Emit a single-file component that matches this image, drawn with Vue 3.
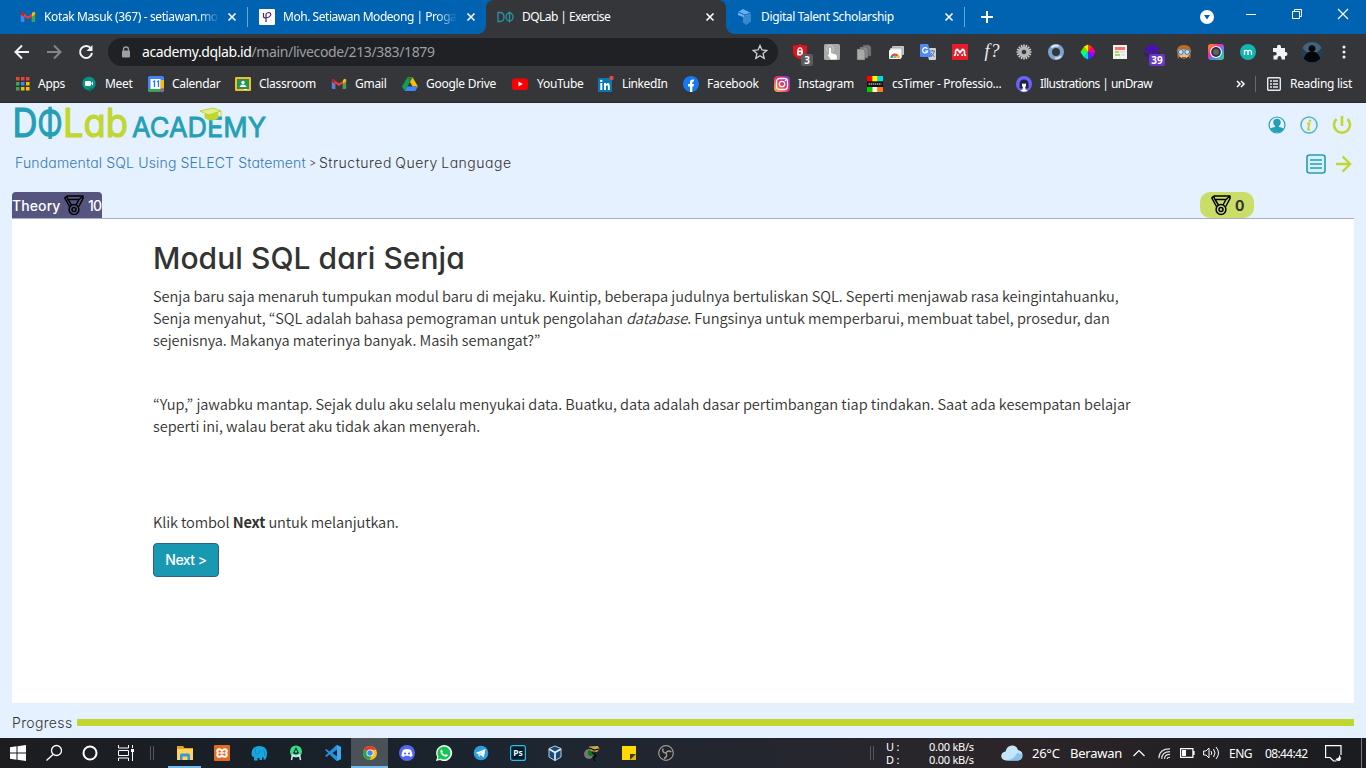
<script setup>
const bookmarks = [
  { id: 'apps', label: 'Apps', w: 66 },
  { id: 'meet', label: 'Meet', w: 67 },
  { id: 'calendar', label: 'Calendar', w: 87 },
  { id: 'classroom', label: 'Classroom', w: 96 },
  { id: 'gmail', label: 'Gmail', w: 71 },
  { id: 'drive', label: 'Google Drive', w: 110 },
  { id: 'youtube', label: 'YouTube', w: 86 },
  { id: 'linkedin', label: 'LinkedIn', w: 85 },
  { id: 'facebook', label: 'Facebook', w: 91 },
  { id: 'instagram', label: 'Instagram', w: 93 },
  { id: 'cstimer', label: 'csTimer - Professio...', w: 149 },
  { id: 'undraw', label: 'Illustrations | unDraw', w: 150 },
]

const extensions = ['shield', 'touch', 'copies', 'cards', 'translate', 'mendeley', 'fq', 'gear', 'ring', 'wheel', 'doc', 'layers', 'face', 'camera', 'm', 'puzzle', 'avatar', 'dots']
const apps = ['folder', 'xampp', 'elephant', 'android', 'vscode', 'chrome', 'discord', 'whatsapp', 'telegram', 'ps', 'vbox', 'game', 'note', 'obs']

const gmail = '<path d="M1.500 3v10h3V7.500L8 10l3.500-2.500V13h3V3L8 7.500z" fill="#ea4335"/><path d="M.8 5.500v6.300q0 1.200 1.200 1.200h2V7.800z" fill="#4285f4"/><path d="M15.200 5.500v6.300q0 1.200-1.200 1.200h-2V7.800z" fill="#34a853"/><path d="M12 4v3.800l3.200-2.300V4q-.8-2-2.400-.7z" fill="#fbbc04"/><path d="M4 4v3.800L.8 5.500V4q.8-2 2.400-.7z" fill="#c5221f"/>'

const icons = {
  gmail,
  apps: '<g fill="#ea4335"><rect x="1" y="1" width="3.500" height="3.500"/><rect x="6" y="1" width="3.500" height="3.500"/><rect x="11" y="1" width="3.500" height="3.500"/></g><rect x="1" y="6" width="3.500" height="3.500" fill="#34a853"/><rect x="6" y="6" width="3.500" height="3.500" fill="#4285f4"/><rect x="11" y="6" width="3.500" height="3.500" fill="#fbbc04"/><rect x="1" y="11" width="3.500" height="3.500" fill="#34a853"/><rect x="6" y="11" width="3.500" height="3.500" fill="#fbbc04"/><rect x="11" y="11" width="3.500" height="3.500" fill="#fbbc04"/>',
  meet: '<circle cx="8" cy="7.500" r="6.700" fill="#009688"/><path d="M8 12v4l5-4z" fill="#00796b"/><rect x="4" y="5" width="6" height="5" rx="1" fill="#fff"/><path d="M10 7.500 12 5.500v4z" fill="#fff"/>',
  calendar: '<rect width="16" height="16" rx="1.500" fill="#4285f4"/><path d="M12.500 4H16v8.500h-3.500z" fill="#fbbc04"/><path d="M2 12.500h10.500V16H2q-2 0-2-2v-1.500z" fill="#34a853"/><path d="M12.500 12.500H16L12.500 16z" fill="#ea4335"/><rect x="2.500" y="3" width="10" height="10" fill="#fff"/><path d="M5 5.800 6.500 5v6M9 5.800l1.500-.8v6" fill="none" stroke="#1a73e8" stroke-width="1.300"/>',
  classroom: '<rect y="1" width="16" height="14" rx="1.300" fill="#f9bb2d"/><rect x="2" y="3" width="12" height="10" fill="#219653"/><circle cx="8" cy="6.500" r="1.700" fill="#fff"/><path d="M4.500 11q.5-2.500 3.500-2.500t3.500 2.500z" fill="#fff"/><path d="M9 13h3v1H9z" fill="#fff"/>',
  drive: '<path d="M5.300 1.500h5.400L16 10.500h-5.400z" fill="#fbbc04"/><path d="M5.300 1.500 8 6 2.700 15 0 10.500z" fill="#0f9d58"/><path d="M5.300 10.500H16L13.300 15H2.700z" fill="#4285f4"/><path d="M5.300 1.500h5.400L8 6z" fill="#188038"/>',
  youtube: '<rect x="0" y="2.500" width="16" height="11.500" rx="3" fill="#f00"/><path d="M6.500 5.500v5l4.300-2.500z" fill="#fff"/>',
  linkedin: '<rect x="0" y="2" width="14" height="14" rx="1" fill="#0a77b5"/><g fill="#fff"><rect x="2.300" y="7" width="2" height="7"/><circle cx="3.300" cy="4.900" r="1.200"/><path d="M6 7h2v1q3.800-2.500 3.800 2V14H9.900v-3.700q-.9-2.300-1.900 0V14H6z"/></g><circle cx="13.500" cy="2" r="2.200" fill="#e34b40"/>',
  facebook: '<circle cx="8" cy="8" r="8" fill="#1778f2"/><path d="M7 16v-5.500H5V8h2V6q0-3 4-2.500v2Q9.300 5.200 9.300 6.500V8H11l-.4 2.500H9.300V16z" fill="#fff"/>',
  instagram: '<defs><linearGradient id="ig" x1="0" y1="1" x2="1" y2="0"><stop stop-color="#ffc14d"/><stop offset=".5" stop-color="#ec2e63"/><stop offset="1" stop-color="#7638e8"/></linearGradient></defs><rect width="16" height="16" rx="4" fill="url(#ig)"/><rect x="2.500" y="2.500" width="11" height="11" rx="3" fill="none" stroke="#fff" stroke-width="1.300"/><circle cx="8" cy="8" r="2.700" fill="none" stroke="#fff" stroke-width="1.300"/><circle cx="11.500" cy="4.500" r=".8" fill="#fff"/>',
  cstimer: '<rect width="16" height="16" fill="#111"/><rect width="5.300" height="5.300" fill="#f00"/><rect x="5.300" width="5.400" height="5.300" fill="#ff0"/><rect x="10.700" width="5.300" height="5.300" fill="#00dce8"/><rect y="11" width="5.300" height="5" fill="#00d000"/><rect x="5.300" y="11" width="5.400" height="5" fill="#fff6d8"/><rect x="10.700" y="11" width="5.300" height="5" fill="#ff7a18"/><path d="M1.500 8h13" stroke="#aaa" stroke-dasharray="1.500 .6" stroke-width="1.600"/>',
  undraw: '<circle cx="8" cy="8" r="8" fill="#6c63ff"/><path d="M3.500 12V8q0-4.500 4.500-4.500T12.500 8v4q-2 1-3 0H6q-1 1-2.500 0z" fill="#24233c"/><path d="M6 7.500q2 .5 4 0V10l-.8 1.500V13l2.300 2q-3.500 1.500-7 0L7 13v-1.500L6 10z" fill="#fff"/>',
  shield: '<path d="M8 0q3 2 7 1.500V8q0 5-7 7.500Q1 13 1 8V1.500Q5 2 8 0z" fill="#e3131b"/><path d="M6 7V5.500q2-3.500 4 0V7" fill="none" stroke="#fff" stroke-width="1.400"/><rect x="5" y="6.500" width="6" height="5" rx="1" fill="#fff"/><circle cx="8" cy="9" r="1" fill="#e3131b"/>',
  touch: '<rect width="16" height="16" rx="1.500" fill="#a9a9a9"/><circle cx="6" cy="5" r="3.500" fill="none" stroke="#ccc"/><path d="M5 4q1-1 2 0v5l5 1.500q1.500 1 .5 5H7L3.500 11l1.500-.5z" fill="#fff"/>',
  copies: '<g stroke="#505154" stroke-width=".5"><path d="M7 1h6l2 2v9H7z" fill="#777"/><path d="M4 3h6l2 2v9H4z" fill="#8b8b8b"/><path d="M1 5h6l2 2v9H1z" fill="#a9a9a9"/></g>',
  cards: '<rect x="4" y="2" width="12" height="9" rx="1" fill="#c8c8c8"/><rect x="2" y="4" width="12" height="10" rx="1" fill="#eee" stroke="#777" stroke-width=".5"/><rect x="1" y="6" width="12" height="9" rx="1" fill="#fff"/><path d="M2.500 14a4.500 4.500 0 0 1 9 0z" fill="#e94335"/><path d="M2.500 14q0-2.500 2-3.500l1.500 3.500z" fill="#34a853"/><path d="M8 14l2-3.500q2 1 2 3.500z" fill="#fbbc04"/><path d="M5 14a2 2 0 0 1 4 0z" fill="#4285f4" stroke="#fff" stroke-width=".6"/>',
  translate: '<path d="M6 4h9q1 0 1 1v10q0 1-1 1H9z" fill="#d0d3d6"/><path d="M1 0h7l4 13H1q-1 0-1-1V1q0-1 1-1z" fill="#4c8bf5"/><path d="M7.300 4.800a2.600 2.600 0 1 0 .4 2.200H5.200" fill="none" stroke="#fff" stroke-width="1.200"/><path d="M10 7h5m-2.500-1v1m2 0q-1 4-3.500 5m0-3 3.500 4" fill="none" stroke="#607d8b"/>',
  mendeley: '<rect width="16" height="16" fill="#e51d2b"/><path d="M1.800 11.300q2.200 0 1.700-2.300Q3.300 5.800 5 5.500M14.200 11.300Q12 11.300 12.500 9q.2-3.200-1.500-3.500M5.200 5.500Q8 9.500 10.800 5.500" fill="none" stroke="#fff" stroke-width="1.700"/><g fill="#fff"><circle cx="5.300" cy="5.800" r="1.300"/><circle cx="10.700" cy="5.800" r="1.300"/><circle cx="8" cy="8" r="1.500"/><circle cx="5.800" cy="11" r="1"/><circle cx="10.200" cy="11" r="1"/></g>',
  fq: '<text x="8" y="13" font-family="Liberation Serif, serif" font-size="18" font-style="italic" text-anchor="middle" fill="#eee" textLength="15">f?</text>',
  gear: '<g stroke="#d0d0d0" stroke-width="1.600"><path d="M8 .5v15M.5 8h15M2.700 2.700l10.600 10.600M13.300 2.700 2.700 13.300M5.200 1l5.600 14M10.800 1 5.200 15M1 5.200l14 5.600M1 10.800l14-5.600"/></g><circle cx="8" cy="8" r="5" fill="#b5b5b5"/><circle cx="8" cy="8" r="2.300" fill="#35363a"/>',
  ring: '<circle cx="8" cy="8" r="6" fill="none" stroke="#7fa3cc" stroke-width="4"/><path d="M3.500 3.500a6.500 6.500 0 0 1 7-1.500" fill="none" stroke="#dce9f5" stroke-width="2"/><path d="M13 12a6.500 6.500 0 0 1-6 2.300" fill="none" stroke="#cbdced" stroke-width="2"/>',
  wheel: '<path d="M8 8V.5L12 2.500z" fill="#f40"/><path d="M8 8l4-5.500L15.500 8z" fill="#ff0080"/><path d="M8 8h7.500L12 13.500z" fill="#a0f"/><path d="M8 8l4 5.500-4 2z" fill="#33f"/><path d="M8 8v7.500l-4-2z" fill="#0cf"/><path d="M8 8l-4 5.500L.5 8z" fill="#0f8"/><path d="M8 8H.5L4 2.500z" fill="#5e0"/><path d="M8 8 4 2.500 8 .5z" fill="#fe0"/>',
  doc: '<rect x="1" y="1" width="14" height="14" fill="#f2f2f2"/><path d="M3 3h10v3H3z" fill="#ff6f6f"/><path d="M3 8h4m-4 3h5" stroke="#8dcf3c" stroke-width="1.500"/><path d="M8 8h5m-4 3h4" stroke="#ddd" stroke-width="1.500"/>',
  layers: '<path d="M8 0l8 5-8 5-8-5z" fill="#4a0fb5"/><path d="M0 8l8 5 8-5v2.500l-8 5-8-5z" fill="#3f0aa0"/>',
  face: '<circle cx="8" cy="8" r="6.500" fill="#f1b98a"/><path d="M1 9Q0 1 8 1t7 8l-2-3-10-1z" fill="#b86a21"/><path d="M4 12l-2 3-1-5zm8 0 2 3 1-5z" fill="#b86a21"/><g fill="#bfe8ff" stroke="#2277bb"><circle cx="4.800" cy="8" r="2.400"/><circle cx="11.200" cy="8" r="2.400"/></g><path d="M6 13.500h4" stroke="#b04030"/>',
  camera: '<defs><linearGradient id="cam" x1="0" y1="0" x2="1" y2="1"><stop stop-color="#ff9c00"/><stop offset=".35" stop-color="#ff2a92"/><stop offset=".65" stop-color="#3e8cff"/><stop offset="1" stop-color="#45e06c"/></linearGradient></defs><rect width="16" height="16" rx="3" fill="url(#cam)"/><circle cx="8" cy="8" r="6" fill="#fff"/><circle cx="8" cy="8" r="4.900" fill="#333"/><circle cx="8" cy="8" r="3" fill="#59676d"/>',
  m: '<circle cx="8" cy="8" r="8" fill="#12b5b1"/><path d="M4.500 11V6v2q0-1.700 1.700-1.700T8 8v3-3q0-1.700 1.700-1.700T11.500 8v3" fill="none" stroke="#fff" stroke-width="1.300"/>',
  puzzle: '<path d="M1 4h4V3q0-2.300 2-2.300T9 3v1h4v4h.500q2 .2 2 2t-2 2H13v3.500H9.500V14q-.2-2-2-2t-2 2v1.500H1.500V11.500H3q1.700-.2 1.700-1.800T3 8H1z" fill="#f1f3f4"/>',
  avatar: '<circle cx="8" cy="8" r="8" fill="#243d51"/><path d="M1 5a8 8 0 0 1 14 0L12 8H4z" fill="#45637b"/><circle cx="8" cy="5.500" r="2.500" fill="#05070a"/><path d="M2 13q1-4 4-5h4q3 1 4 5-6 5-12 0z" fill="#05070a"/>',
  dots: '<g fill="#f1f3f4"><circle cx="8" cy="3" r="1.500"/><circle cx="8" cy="8" r="1.500"/><circle cx="8" cy="13" r="1.500"/></g>',
  folder: '<path d="M0 1h6l1.500 2H16v12H0z" fill="#e8a317"/><path d="M0 4h16v11H0z" fill="#ffd75e"/><path d="M3 15V10q0-1.500 1.500-1.500h7Q13 8.500 13 10v5h-2.500v-3.500h-5V15z" fill="#3b96dd"/>',
  xampp: '<rect width="16" height="16" rx="1" fill="#e56a1f"/><path d="M4 4.500q2-1 4 1.500 2-2.500 4-1.500 1.500 1.500 0 3.500 1.500 2 0 3.500-2 1-4-1-2 2-4 1-1.500-1.500 0-3.500-1.500-2 0-3.500z" fill="none" stroke="#fff" stroke-width="2"/><path d="M5.500 8h5" stroke="#fff" stroke-width="1.500"/>',
  elephant: '<path d="M.5 9Q.5 1.500 8 1q8 0 8 7 0 4-1.500 6.500h-2V12l-1.500 1v2H8.500v-2h-2v2.500H3V12Q.5 12 .5 9z" fill="#18a5dc"/><path d="M5 2.500q-2 4 .5 7 3 0 3.500-4M12.500 5q2 3 1 6" fill="none" stroke="#0e86bd" stroke-width=".8"/>',
  android: '<circle cx="8" cy="6.500" r="6" fill="#3ddc84"/><path d="M4.500 9.500 3.500 15M11.500 9.500l1 5.500M4 10q4 2.500 8 0" fill="none" stroke="#dfe7ee" stroke-width="1.500"/><path d="M8 2 11 8q-3 2.500-6 0z" fill="#083042"/><circle cx="8" cy="6.500" r="1.200" fill="#3ddc84"/>',
  vscode: '<path d="M11.500 0 16 2v12l-4.500 2L4.500 9.500 1.500 12 0 11l3.200-3L0 5l1.500-1 3 2.500zM12 4.500 7.500 8l4.500 3.500z" fill="#2590dc" fill-rule="evenodd"/><path d="M12 0l4 2v12l-4 2z" fill="#38aaf2"/>',
  chrome: '<circle cx="8" cy="8" r="7" fill="#fbc116"/><path d="M8 8 2 4.400A7 7 0 0 1 14.100 4.700H8z" fill="#e33b2e"/><path d="M2 4.400A7 7 0 0 0 7.500 15l3-5.500L8 8z" fill="#2ba24c"/><circle cx="8" cy="8" r="3.500" fill="#fff"/><circle cx="8" cy="8" r="2.700" fill="#4285f4"/>',
  discord: '<circle cx="8" cy="8" r="8" fill="#5865f2"/><path d="M4 5q4-2 8 0 1.500 3 1.500 6l-2.500 1-.8-1.200H5.800L5 12l-2.500-1Q2.500 8 4 5z" fill="#fff"/><circle cx="6" cy="8.500" r="1.100" fill="#5865f2"/><circle cx="10" cy="8.500" r="1.100" fill="#5865f2"/>',
  whatsapp: '<path d="M0 16l1.200-4A8 8 0 1 1 4 14.900z" fill="#fff"/><path d="M1.600 14.400l.8-2.900A6.500 6.500 0 1 1 4.500 13.600z" fill="#10c64d"/><path d="M5.500 4.500 7 6.500l-.8 1q1 1.800 2.800 2.600l1-1 2 1q-.5 2-2.500 1.700Q4.500 10.500 4.300 6q.2-1.200 1.200-1.500z" fill="#fff"/>',
  telegram: '<circle cx="8" cy="8" r="7.300" fill="#2c9ed8"/><path d="M2.500 8 12.500 4l-1.700 8.500L7.500 10l-1.500 2-.7-3z" fill="#fff"/><path d="M5.500 9l5-3.500L7 9.800l-1 2z" fill="#b5d7ed"/>',
  ps: '<rect x=".6" y=".6" width="14.800" height="14.800" rx="2" fill="#001e29" stroke="#2cbdec" stroke-width="1.200"/><text x="8" y="11.200" font-size="8.500" font-weight="700" text-anchor="middle" fill="#e7f8ff">Ps</text>',
  vbox: '<path d="M2 3.500 8 1l6 2.500V12l-6 4-6-4z" fill="#194a7a"/><path d="M2 4l6 3.500L14 4M8 7.500v8" fill="none" stroke="#e6f0f8" stroke-width="1.700"/><path d="M2 3.500V12l6 3.700 6-3.700V3.500L8 1z" fill="none" stroke="#b9cede" stroke-width="1"/>',
  game: '<circle cx="5" cy="9" r="5" fill="#777"/><circle cx="7" cy="8" r="3" fill="#087a18"/><path d="M5 1.500l9-.5 1.500 3-2.500 3-6-1z" fill="#d7a447"/><path d="M6 3l4 2 5-1M8 7l4 4-3 1 2 4" fill="none" stroke="#080808" stroke-width="1.200"/>',
  note: '<path d="M1 1h14v8l-6 6H1z" fill="#ffd900"/><path d="M9 15V9h6z" fill="#3b3b35"/><path d="M15 9v6H9z" fill="#e8b500"/>',
  obs: '<circle cx="8" cy="8" r="7.300" fill="#222" stroke="#9b9b9b" stroke-width="1.200"/><g fill="none" stroke="#9b9b9b" stroke-width="1.500"><path d="M8 8Q4 8 5 3.500M8 8q2-3.500 5.500-1M8 8q2 3.500-2 5.500"/></g>',
  medal: '<g fill="none" stroke="currentColor" stroke-width="1.500" stroke-linejoin="round"><path d="M2.500 1H19v2.500l-4.200 8M2.500 1.200.8 3l4.700 8.500M2.500 1.200 4 4.500h11L18.800 1.200M4 4.500l3.500 5.500M15 4.500 12 10"/><circle cx="10" cy="14.500" r="4.900"/><circle cx="10" cy="14.500" r="2"/></g>',
}
</script>

<template>
  <div class="screen">
    <header class="browser">
      <div class="tabs">
        <div class="tab first">
          <svg class="ic" viewBox="0 0 16 16" v-html="icons.gmail"></svg>
          <span class="title t1">Kotak Masuk (367) - setiawan.mo</span>
          <svg class="x" viewBox="0 0 8 8"><path d="M.5.500l7 7m0-7-7 7" /></svg>
        </div>
        <div class="tab second">
          <svg class="ic" viewBox="0 0 16 16"><rect width="16" height="16" rx="1" fill="#fff" /><path d="M7 13V5q1-1.500 3-1.500 2.500.5 1.500 3Q10.500 8.500 7 9M4.500 4v3.500q0 1.500 2.500 1.500" fill="none" stroke="#49266b" stroke-width="1.200" /></svg>
          <span class="title t2">Moh. Setiawan Modeong | Proga</span>
          <svg class="x" viewBox="0 0 8 8"><path d="M.5.500l7 7m0-7-7 7" /></svg>
        </div>
        <div class="tab active">
          <svg class="dq" viewBox="0 0 17 12"><g fill="none" stroke="#2796a5" stroke-width="1.300"><path d="M1 1.500h2q4 0 4 4.500t-4 4.500H1z" /><ellipse cx="12.500" cy="6" rx="3.500" ry="4" /><path d="M12.500 0.500v11" /></g></svg>
          <span class="title t3">DQLab | Exercise</span>
          <svg class="x" viewBox="0 0 8 8"><path d="M.5.500l7 7m0-7-7 7" /></svg>
        </div>
        <div class="tab last">
          <svg class="ic" viewBox="0 0 16 16"><path d="M1 3l5-3 8 4v8l-5 4-3-2V8L1 6z" fill="#63b1f4" /><path d="M1 3l7 3 6-2M8 6v9M6 8v6l3 2" fill="none" stroke="#195fa7" /><path d="M9 7l5-3v8l-5 4z" fill="#3687d1" /></svg>
          <span class="title t4">Digital Talent Scholarship</span>
          <svg class="x" viewBox="0 0 8 8"><path d="M.5.500l7 7m0-7-7 7" /></svg>
        </div>
        <svg class="plus" viewBox="0 0 12 12"><path d="M6 0v12M0 6h12" stroke="#fff" stroke-width="2" /></svg>
        <div class="window">
          <svg width="14" height="14" viewBox="0 0 14 14"><circle cx="7" cy="7" r="7" fill="#fff" /><path d="M4 5h6L7 9.500z" fill="#0063b1" /></svg>
          <svg class="up" width="10" height="10" viewBox="0 0 10 10"><path d="M0 5.500h10" stroke="#fff" /></svg>
          <svg class="up" width="10" height="10" viewBox="0 0 10 10"><path d="M.5 2.500h7v7h-7zM2.500 2.500v-2h7v7h-2" fill="none" stroke="#fff" /></svg>
          <svg class="up" width="10" height="10" viewBox="0 0 10 10"><path d="M0 0l10 10M10 0 0 10" stroke="#fff" stroke-width="1.200" /></svg>
        </div>
      </div>

      <div class="toolbar">
        <div class="nav">
          <svg viewBox="0 0 16 16"><path d="M15 8H2M8 1.500 1.500 8 8 14.500" stroke="#f1f3f4" /></svg>
          <svg viewBox="0 0 16 16"><path d="M1 8h13M8 1.500 14.500 8 8 14.500" stroke="#85868a" /></svg>
          <svg viewBox="0 0 16 16"><path d="M13 4.500A6 6 0 1 0 14 9" stroke="#f1f3f4" /><path d="M14.500 1v6h-6z" fill="#f1f3f4" /></svg>
        </div>
        <div class="omnibox">
          <svg class="lock" viewBox="0 0 10 12"><path d="M2.500 5V3.500a2.500 2.500 0 0 1 5 0V5" fill="none" stroke="#9aa0a6" stroke-width="1.300" /><rect x="1" y="4.500" width="8" height="7" rx="1" fill="#9aa0a6" /></svg>
          <span class="url">academy.dqlab.id<i>/main/livecode/213/383/1879</i></span>
          <svg class="star" viewBox="0 0 16 16"><path d="M8 1.500 9.900 6l4.900.4-3.700 3.200 1.100 4.700L8 11.800l-4.200 2.500 1.100-4.700L1.200 6.400 6.100 6z" fill="none" stroke="#d0d2d5" stroke-width="1.300" /></svg>
        </div>
        <div class="extensions">
          <div v-for="e in extensions" :key="e" class="ext" :class="e">
            <svg viewBox="0 0 16 16" v-html="icons[e]"></svg>
            <b v-if="e === 'shield'" class="count">3</b>
            <b v-if="e === 'layers'" class="count violet">39</b>
          </div>
        </div>
      </div>

      <div class="bookmarks">
        <div v-for="b in bookmarks" :key="b.id" class="bookmark" :class="b.id" :style="{ width: b.w + 'px' }">
          <svg viewBox="0 0 16 16" v-html="icons[b.id]"></svg>
          <span>{{ b.label }}</span>
        </div>
        <div class="reading">
          <svg class="more" viewBox="0 0 9 8"><path d="M1 1l3 3-3 3M5 1l3 3-3 3" fill="none" stroke="#fff" stroke-width="1.500" /></svg>
          <i></i>
          <svg class="list" viewBox="0 0 14 14"><rect x=".7" y=".7" width="12.600" height="12.600" rx="1" fill="none" stroke="#e8eaed" stroke-width="1.400" /><path d="M3 4h2m1 0h5M3 7h2m1 0h5M3 10h2m1 0h5" stroke="#e8eaed" stroke-width="1.500" /></svg>
          <span>Reading list</span>
        </div>
      </div>
    </header>

    <main class="page">
      <div class="brand">
        <svg class="logo" width="254" height="34" viewBox="0 0 254 34">
          <g fill="#249fb5" stroke="#249fb5">
            <text x="-1.500" y="31" font-size="39" stroke-width="1.200" textLength="25" lengthAdjust="spacingAndGlyphs">D</text>
            <text x="23.500" y="31" font-size="39" stroke-width="1.200" textLength="25" lengthAdjust="spacingAndGlyphs">Φ</text>
            <text x="118" y="31" font-size="27.500" stroke-width=".8" textLength="134" lengthAdjust="spacingAndGlyphs">ACADEMY</text>
          </g>
          <text x="49" y="31" font-size="39" fill="#c1d730" stroke="#c1d730" stroke-width="1.200" textLength="65" lengthAdjust="spacingAndGlyphs">Lab</text>
          <path d="M186 5l13-3 8 3-12 4z" fill="#e3ee92" stroke="#c1d730" /><path d="M191 8v4q7 4 13 0V6l-9 3zM207 5v5" fill="#c1d730" stroke="#c1d730" />
        </svg>
        <div class="actions">
          <svg width="18" height="18" viewBox="0 0 18 18"><circle cx="9" cy="9" r="8" fill="#e6f1ff" stroke="#249fb5" stroke-width="1.200" /><circle cx="9" cy="6.500" r="3.700" fill="#249fb5" /><path d="M7 9h4v2q4 .5 5 2-7 7-14 0 1-1.500 5-2z" fill="#249fb5" /></svg>
          <svg width="18" height="18" viewBox="0 0 18 18"><circle cx="9" cy="9" r="8" fill="none" stroke="#55b3c5" stroke-width="1.500" /><circle cx="10" cy="4.700" r="1.300" fill="#c1d730" /><path d="M7 7.500h2.500L8 13.500h2" fill="none" stroke="#c1d730" stroke-width="1.800" /></svg>
          <svg width="20" height="20" viewBox="0 0 20 20"><path d="M10 1v10M4.500 4a8 8 0 1 0 11 0" fill="none" stroke="#c1d730" stroke-width="2.600" /></svg>
        </div>
      </div>

      <div class="crumbs">
        <p><a>Fundamental SQL Using SELECT Statement</a><i>&gt;</i><span>Structured Query Language</span></p>
        <div class="actions steps">
          <svg width="20" height="20" viewBox="0 0 20 20"><rect x="1" y="1" width="18" height="18" rx="2.500" fill="#d9f0f7" stroke="#249fb5" stroke-width="1.600" /><path d="M4 6h12M4 10h12M4 14h12" stroke="#249fb5" stroke-width="1.300" /></svg>
          <svg width="17" height="18" viewBox="0 0 18 18"><path d="M1 9h15M8 1l8 8-8 8" fill="none" stroke="#c1d730" stroke-width="2.500" /></svg>
        </div>
      </div>

      <div class="tabline">
        <div class="theory"><span>Theory</span><svg viewBox="0 0 20 20" v-html="icons.medal"></svg><span>10</span></div>
        <div class="score"><svg viewBox="0 0 20 20" v-html="icons.medal"></svg><b>0</b></div>
      </div>

      <article class="panel">
        <h1>Modul SQL dari Senja</h1>
        <p class="intro">
          Senja baru saja menaruh tumpukan modul baru di mejaku. Kuintip, beberapa judulnya bertuliskan SQL. Seperti menjawab rasa keingintahuanku,<br>
          Senja menyahut, “SQL adalah bahasa pemograman untuk pengolahan <em>database</em>. Fungsinya untuk memperbarui, membuat tabel, prosedur, dan<br>
          sejenisnya. Makanya materinya banyak. Masih semangat?”
        </p>
        <p class="reply">
          “Yup,” jawabku mantap. Sejak dulu aku selalu menyukai data. Buatku, data adalah dasar pertimbangan tiap tindakan. Saat ada kesempatan belajar<br>
          seperti ini, walau berat aku tidak akan menyerah.
        </p>
        <p class="hint">Klik tombol <b>Next</b> untuk melanjutkan.</p>
        <button>Next &gt;</button>
      </article>

      <div class="progress"><span>Progress</span><i></i></div>
    </main>

    <footer class="taskbar">
      <div class="cell"><svg viewBox="0 0 16 16"><path d="M0 2.300 6.500 1.300v6.200H0zM7.500 1.200 16 0v7.500H7.500zM0 8.500h6.500v6.200L0 13.700zM7.500 8.500H16V16l-8.500-1.200z" fill="#fff" /></svg></div>
      <div class="cell"><svg viewBox="0 0 16 16"><g fill="none" stroke="#fff" stroke-width="1.300"><circle cx="10.500" cy="5.500" r="5" /><path d="M7 9.500.500 15.500" /></g></svg></div>
      <div class="cell"><svg viewBox="0 0 16 16"><circle cx="8" cy="8" r="6.500" fill="none" stroke="#fff" stroke-width="2" /></svg></div>
      <div class="cell"><svg viewBox="0 0 16 16"><path d="M.5 0v3h10V0M.5 16v-3h10v3M.500 5.500h10v5H.500zM14.500 0v3M14.500 7v9" fill="none" stroke="#fff" /><rect x="13" y="4" width="3" height="3" fill="#fff" /></svg></div>
      <i class="grip"></i>
      <div v-for="a in apps" :key="a" class="cell app" :class="a"><svg viewBox="0 0 16 16" v-html="icons[a]"></svg></div>
      <div class="tray">
        <i class="grip"></i>
        <div class="net"><span>U :</span><span>0.00 kB/s</span><span>D :</span><span>0.00 kB/s</span></div>
        <svg class="cloud" viewBox="0 0 22 16"><path d="M5 15.500a4.500 4.500 0 0 1-.5-9Q6 0 12 .5q4 .5 5 4.500 5 1 4.500 6-.5 4-4.500 4.500z" fill="#c5e5fa" /><path d="M5 15.500q8-1 10-6 2-3 6 0 .5 5-4 6z" fill="#89c2ec" /></svg>
        <span class="temp">26°C</span><span class="weather">Berawan</span>
        <svg class="chev" viewBox="0 0 12 8"><path d="M.5 7 6 1.500 11.500 7" fill="none" stroke="#fff" stroke-width="1.200" /></svg>
        <svg class="wifi" viewBox="0 0 14 14"><g fill="none" stroke="#ddd" stroke-width="1.200"><path d="M1 12Q1 2 13 2M4 13q0-8 9-8M7 13q0-5 6-5M10 13q0-2 3-2" /></g></svg>
        <svg class="battery" viewBox="0 0 15 10"><path d="M.6.600h12.300v8.800H.6zM14 3v4" fill="none" stroke="#fff" stroke-width="1.200" /><path d="M2 2h4v6H2z" fill="#fff" /></svg>
        <svg class="speaker" viewBox="0 0 17 14"><path d="M.6 5H3l3-3v10L3 9H.600zM8 5q1.500 2 0 4M10.500 3q3 4 0 8M13 1q5 6 0 12" fill="none" stroke="#fff" /></svg>
        <span class="lang">ENG</span><span class="time">08:44:42</span>
        <svg class="notice" viewBox="0 0 17 17"><path d="M16 10V.6H.600v11.900H5l3.500 3.500h3" fill="none" stroke="#fff" stroke-width="1.200" /><path d="M14 9.500q1 3.500-3.500 4.500 1 2.500 4 2 3-2-.5-6.500z" fill="#fff" /></svg>
      </div>
    </footer>
  </div>
</template>

<style>
body { overflow: hidden; }
</style>

<style scoped>
* { box-sizing: border-box; }
svg { display: block; flex: none; overflow: visible; }
.screen { width: 1366px; height: 768px; display: flex; flex-direction: column; overflow: hidden; background: #e6f1ff; font-family: "Noto Sans", "Open Sans", sans-serif; }
.browser { height: 103px; flex: none; background: #35363a; color: #fff; border-bottom: 1px solid #292a2c; font-size: 12px; }
.tabs { height: 34px; background: #0063b1; display: flex; align-items: center; }
.tab { display: flex; align-items: center; height: 34px; position: relative; }
.ic { width: 16px; height: 16px; }
.dq { width: 17px; height: 12px; }
.title { white-space: nowrap; margin-left: 8px; line-height: 18px; }
.x { width: 8px; height: 8px; fill: none; stroke: #fff; stroke-width: 1.600; margin-left: auto; }
.first { width: 247px; padding: 0 11px 0 20px; }
.second { width: 239px; padding: 0 11px 0 12px; }
.active { width: 240px; padding: 0 12px 0 11px; background: #35363a; border-radius: 8px 8px 0 0; }
.active::before, .active::after { content: ""; position: absolute; bottom: 0; width: 8px; height: 8px; }
.active::before { left: -8px; background: radial-gradient(circle at 0 0, transparent 7.500px, #35363a 8px); }
.active::after { right: -8px; background: radial-gradient(circle at 100% 0, transparent 7.500px, #35363a 8px); }
.last { width: 238px; padding: 0 11px; }
.first::after, .last::after { content: ""; position: absolute; right: -1px; top: 7px; width: 1px; height: 20px; background: #6aa4d2; }
.t1, .t2 { -webkit-mask-image: linear-gradient(90deg, #000 88%, transparent); mask-image: linear-gradient(90deg, #000 88%, transparent); }
.t1 { width: 176px; letter-spacing: -.38px; }
.t2 { width: 174px; letter-spacing: -.46px; }
.t3 { letter-spacing: -.55px; }
.t4 { letter-spacing: -.36px; }
.plus { width: 12px; height: 12px; margin-left: 17px; }
.window { margin-left: auto; display: flex; align-items: center; gap: 36px; padding-right: 18px; }
.window svg:first-child { margin-right: -4px; }
.up { margin-top: -6px; }

.toolbar { height: 36px; display: flex; align-items: center; }
.nav { display: flex; gap: 16px; padding: 0 14px; width: 108px; }
.nav svg { width: 16px; height: 16px; fill: none; stroke-width: 2; }
.omnibox { width: 670px; height: 28px; border-radius: 14px; background: #202124; display: flex; align-items: center; padding: 0 10px 0 13px; }
.lock { width: 10px; height: 12px; }
.url { margin-left: 11px; font-size: 14px; white-space: nowrap; letter-spacing: -.38px; line-height: 20px; }
.url i { color: #9aa0a6; font-style: normal; }
.star { width: 16px; height: 16px; margin-left: auto; }
.extensions { display: flex; margin-left: 6px; }
.ext { width: 32px; height: 24px; display: grid; place-items: center; position: relative; }
.ext svg { width: 16px; height: 16px; }
.avatar svg { width: 22px; height: 22px; }
.count { position: absolute; left: 17px; top: 14px; width: 12px; height: 12px; line-height: 12px; border-radius: 2px; background: #5b5b5e; font-size: 10px; text-align: center; }
.violet { width: 16px; left: 13px; background: #6a36c8; }

.bookmarks { height: 28px; display: flex; align-items: center; padding: 0 14px 1px 15px; }
.bookmark { display: flex; align-items: center; flex: none; gap: 8px; white-space: nowrap; letter-spacing: -.28px; }
.bookmark svg { width: 16px; height: 16px; }
.bookmark.apps { gap: 7px; }
.bookmark.linkedin { letter-spacing: -.4px; }
.bookmark.youtube, .bookmark.cstimer { gap: 9px; }
.bookmark.facebook, .bookmark.instagram, .bookmark.undraw { gap: 8px; }
.bookmark.cstimer { letter-spacing: -.3px; }
.bookmark.undraw { letter-spacing: -.56px; }
.reading { margin-left: auto; display: flex; align-items: center; white-space: nowrap; letter-spacing: -.3px; }
.more { width: 9px; height: 8px; }
.reading i { height: 16px; border-left: 1px solid #68696c; margin: 0 11px 0 10px; }
.list { width: 14px; height: 14px; margin-right: 9px; }

.page { height: 635px; flex: none; font-family: Inter, "Open Sans", sans-serif; font-feature-settings: "cv11"; color: #333; display: flex; flex-direction: column; padding: 0 12px; }
.brand { height: 41px; display: flex; justify-content: space-between; align-items: flex-start; padding: 3px 2px 0; }
.actions { display: flex; align-items: center; gap: 14px; margin-top: 9px; }
.crumbs { height: 48px; display: flex; justify-content: space-between; padding: 0 2px 0 3px; font-size: 14px; }
.crumbs p { margin: 8px 0 0; line-height: 22px; font-weight: 300; white-space: nowrap; letter-spacing: .16px; display: flex; }
.crumbs a { color: #337ab7; width: 294px; }
.crumbs i { font-style: normal; font-size: 11px; width: 10px; }
.crumbs span { letter-spacing: .5px; word-spacing: -1px; }
.steps { gap: 9px; height: 20px; margin-top: 10px; }
.tabline { height: 27px; display: flex; justify-content: space-between; border-bottom: 1px solid #aaabca; font-size: 14px; font-weight: 500; }
.theory { width: 90px; height: 26px; background: #55557f; border-radius: 4px 4px 0 0; color: #fff; display: flex; align-items: center; }
.theory svg { width: 20px; height: 20px; color: #000; margin: 0 4px 0 3px; }
.theory span { width: 49px; letter-spacing: .1px; }
.theory span:last-child { width: auto; letter-spacing: -.8px; }
.score { width: 54px; height: 26px; margin-right: 100px; border-radius: 10px; background: #cbdd69; display: flex; align-items: center; padding-left: 11px; gap: 4px; }
.score svg { width: 20px; height: 20px; color: #000; }
.panel { height: 484px; background: #fff; padding: 22px 141px 0; font-family: "Noto Sans CJK KR", sans-serif; font-size: 14.600px; line-height: 22px; }
h1 { margin: 0; font: 500 30px/34px Inter, sans-serif; font-feature-settings: "cv11"; letter-spacing: .05px; }
.panel p { margin: 0; white-space: nowrap; font-weight: 350; letter-spacing: -.05px; }
.panel .intro { margin-top: 10px; height: 66px; }
.panel .reply { margin-top: 42px; height: 44px; }
.panel .hint { margin-top: 74px; height: 22px; letter-spacing: -.11px; }
button { margin: 10px 0 0; width: 66px; height: 34px; padding: 0 0 1px; background: #1998b2; border: 1px solid #286090; border-radius: 4px; color: #fff; font: 500 14px Inter, sans-serif; letter-spacing: -.5px; display: block; }
.progress { height: 35px; display: flex; align-items: center; font-size: 14px; font-weight: 300; padding-top: 4px; }
.progress span { width: 65px; letter-spacing: .35px; }
.progress i { flex: 1; height: 7px; background: #c1d730; }

.taskbar { height: 30px; flex: none; background: linear-gradient(90deg, #1d1d20, #182028 20%, #1d2631 40%, #26262e 60%, #2b2528 75%, #1a1c20); color: #fff; display: flex; align-items: center; }
.cell { width: 36px; height: 30px; display: grid; place-items: center; border-bottom: 2px solid transparent; padding-top: 2px; }
.cell svg { width: 16px; height: 16px; }
.grip { width: 4px; height: 14px; border: solid #56585b; border-width: 0 1px; margin-left: 6px; }
.app { width: 37px; }
.folder { margin-left: 12px; border-image: linear-gradient(90deg, transparent 4px, #76b9ed 4px, #76b9ed 33px, transparent 33px) 2; }
.chrome { background: #4a5158; border-color: #76b9ed; }
.tray { margin-left: auto; display: flex; align-items: center; white-space: nowrap; height: 30px; width: 496px; border-right: 1px solid #777; margin-right: 4px; font-size: 12px; flex: none; letter-spacing: -.25px; }
.tray .grip { margin-left: 4px; flex: none; }
.net { display: grid; grid-template-columns: 43px 72px; margin-left: 12px; font-size: 11px; line-height: 13px; }
.cloud { width: 22px; height: 16px; }
.temp { margin-left: 9px; width: 38px; font-size: 13px; }
.weather { width: 64px; font-size: 13px; }
.chev { width: 12px; height: 8px; margin-left: -1px; }
.wifi { width: 13px; height: 13px; margin-left: 13px; }
.battery { width: 15px; height: 10px; margin-left: 9px; }
.speaker { width: 17px; height: 14px; margin-left: 8px; }
.lang { margin-left: 9px; width: 36px; letter-spacing: -.5px; }
.time { width: 60px; letter-spacing: -.65px; }
.notice { width: 17px; height: 17px; }
</style>
